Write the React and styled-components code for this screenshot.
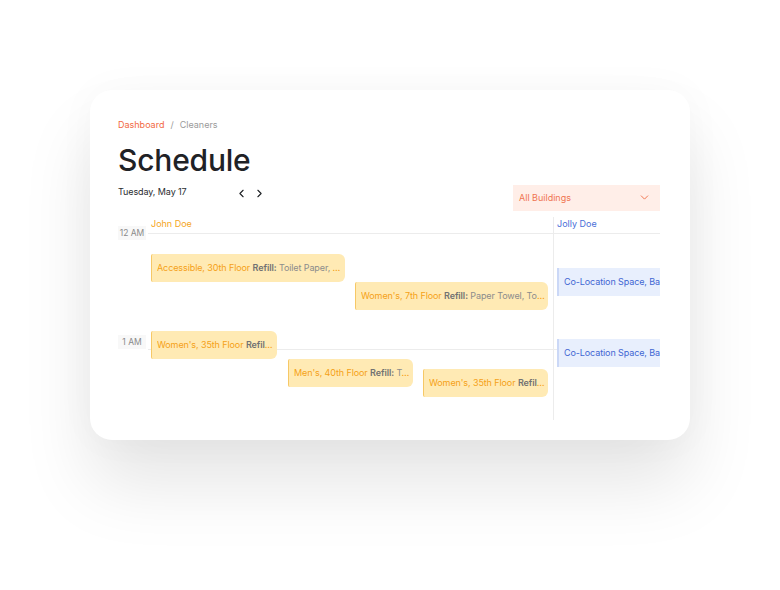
import React from 'react'
import styled, { createGlobalStyle } from 'styled-components'
import { ChevronLeft, ChevronRight, ChevronDown } from 'lucide-react'

const GlobalStyle = createGlobalStyle`
  body {
    margin: 0;
    background: #ffffff;
    font-family: Inter, "Noto Sans", sans-serif;
  }
`

const Page = styled.div`
  padding: 90px 90px 150px;
`

const Card = styled.div`
  width: 600px;
  height: 350px;
  box-sizing: border-box;
  padding: 29px 30px 0 28px;
  background: #fff;
  border-radius: 22px;
  box-shadow: 0 45px 70px rgba(0, 0, 0, 0.1), 0 0 40px rgba(0, 0, 0, 0.03);
  overflow: hidden;
`

const Breadcrumb = styled.div`
  display: flex;
  gap: 6px;
  font-size: 9px;
  line-height: 12px;
  color: #9a9a9a;
`

const Crumb = styled.span`
  color: ${p => (p.$active ? '#f26a43' : '#9a9a9a')};
`

const Title = styled.h1`
  margin: 11px 0 0;
  font-size: 30px;
  line-height: 36px;
  font-weight: 500;
  color: #1f2226;
  letter-spacing: -0.2px;
`

const Toolbar = styled.div`
  display: flex;
  align-items: flex-start;
  margin-top: 7px;
`

const DateLabel = styled.div`
  width: 116px;
  font-size: 9px;
  line-height: 14px;
  color: #2a2c30;
  letter-spacing: -0.1px;
`

const Arrows = styled.div`
  display: flex;
  gap: 4px;
  color: #1f2226;
  padding-top: 1px;
`

const ArrowButton = styled.button`
  border: 0;
  background: none;
  padding: 0;
  width: 14px;
  height: 14px;
  display: flex;
  align-items: center;
  justify-content: center;
  color: inherit;
`

const Select = styled.div`
  margin-left: auto;
  width: 147px;
  height: 26px;
  box-sizing: border-box;
  padding: 0 9px 1px 6px;
  display: flex;
  align-items: center;
  justify-content: space-between;
  background: #ffeee8;
  color: #f07550;
  font-size: 9px;
`

const Calendar = styled.div`
  display: flex;
  margin-top: 6px;
  height: 203px;
  overflow: hidden;
`

const Gutter = styled.div`
  width: 29px;
  flex-shrink: 0;
  padding-top: 16px;
`

const HourSlot = styled.div`
  height: 116px;
`

const HourLabel = styled.div`
  width: 28px;
  height: 14px;
  margin-top: -7px;
  background: #f8f8f8;
  font-size: 8.5px;
  line-height: 14px;
  text-align: center;
  color: #8a8a8a;
`

const Columns = styled.div`
  display: flex;
  flex: 1;
  min-width: 0;
  overflow: hidden;
`

const Column = styled.div`
  width: 406px;
  flex-shrink: 0;
  box-sizing: border-box;
  border-left: 1px solid ${p => (p.$first ? 'transparent' : '#ececec')};
`

const PersonName = styled.div`
  height: 16px;
  padding-left: 3px;
  font-size: 9px;
  line-height: 14px;
  color: ${p => p.$color};
`

const Track = styled.div`
  position: relative;
  height: 187px;
  overflow: hidden;
`

const HourRow = styled.div`
  height: 116px;
  border-top: 1px solid #ececec;
  box-sizing: border-box;
`

const Event = styled.div`
  position: absolute;
  top: ${p => p.$top}px;
  left: ${p => p.$left + 3}px;
  width: ${p => p.$width}px;
  height: 28px;
  box-sizing: border-box;
  padding: 0 3px 1px 5px;
  display: flex;
  align-items: center;
  font-size: 9px;
  letter-spacing: -0.1px;
  white-space: nowrap;
  overflow: hidden;
  background: ${p => (p.$tone === 'blue' ? '#e8effd' : '#ffeab4')};
  border-left: ${p => (p.$tone === 'blue' ? '2px solid #cbd8f7' : '1px solid #f6c866')};
  border-radius: ${p => (p.$tone === 'blue' ? '0' : '2px 6px 6px 2px')};
  color: ${p => (p.$tone === 'blue' ? '#3f66d3' : '#f5a117')};
`

const EventText = styled.span`
  overflow: hidden;
  text-overflow: ${p => (p.$clip ? 'clip' : 'ellipsis')};
  b {
    font-weight: 600;
    color: #727272;
  }
  em {
    font-style: normal;
    color: #8c8c8c;
  }
`

const people = [
  {
    name: 'John Doe',
    color: '#f5a623',
    events: [
      { top: 21, left: 0, width: 194, place: 'Accessible, 30th Floor', items: 'Toilet Paper, Towels' },
      { top: 49, left: 204, width: 193, place: "Women's, 7th Floor", items: 'Paper Towel, Toilet Paper' },
      { top: 98, left: 0, width: 126, place: "Women's, 35th Floor", items: 'Soap' },
      { top: 126, left: 137, width: 125, place: "Men's, 40th Floor", items: 'Towels' },
      { top: 136, left: 272, width: 125, place: "Women's, 35th Floor", items: 'Soap' },
    ],
  },
  {
    name: 'Jolly Doe',
    color: '#4a6fd8',
    events: [
      { top: 35, left: 0, width: 220, place: 'Co-Location Space, Basement', tone: 'blue' },
      { top: 106, left: 0, width: 220, place: 'Co-Location Space, Basement', tone: 'blue' },
    ],
  },
]

function App() {
  return (
    <>
      <GlobalStyle />
      <Page>
        <Card>
          <Breadcrumb>
            <Crumb $active>Dashboard</Crumb>
            <span>/</span>
            <Crumb>Cleaners</Crumb>
          </Breadcrumb>
          <Title>Schedule</Title>
          <Toolbar>
            <DateLabel>Tuesday, May 17</DateLabel>
            <Arrows>
              <ArrowButton><ChevronLeft size={13} strokeWidth={2} /></ArrowButton>
              <ArrowButton><ChevronRight size={13} strokeWidth={2} /></ArrowButton>
            </Arrows>
            <Select>
              All Buildings
              <ChevronDown size={13} strokeWidth={1.8} />
            </Select>
          </Toolbar>
          <Calendar>
            <Gutter>
              <HourSlot><HourLabel>12 AM</HourLabel></HourSlot>
              <HourSlot><HourLabel>1 AM</HourLabel></HourSlot>
            </Gutter>
            <Columns>
              {people.map((person, i) => (
                <Column key={person.name} $first={i === 0}>
                  <PersonName $color={person.color}>{person.name}</PersonName>
                  <Track>
                    <HourRow />
                    <HourRow />
                    {person.events.map((ev, j) => (
                      <Event key={j} $top={ev.top} $left={ev.left} $width={ev.width} $tone={ev.tone}>
                        <EventText $clip={ev.tone === 'blue'}>
                          {ev.place}
                          {ev.tone !== 'blue' && (
                            <>
                              {' '}<b>Refill:</b>
                              <em> {ev.items}</em>
                            </>
                          )}
                        </EventText>
                      </Event>
                    ))}
                  </Track>
                </Column>
              ))}
            </Columns>
          </Calendar>
        </Card>
      </Page>
    </>
  )
}

export default App
